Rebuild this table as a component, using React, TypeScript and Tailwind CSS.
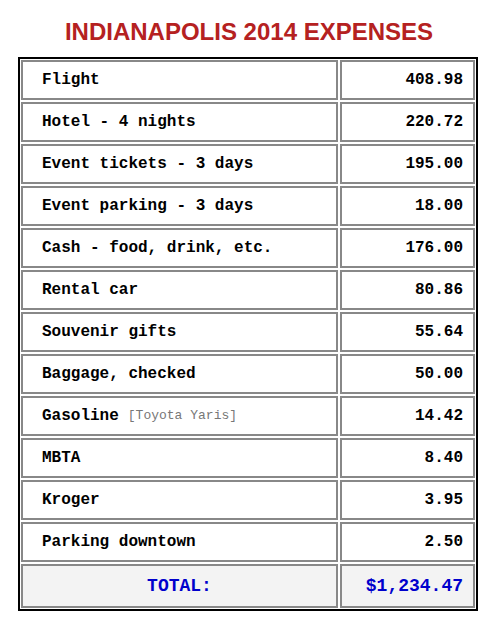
const rows: { label: string; note?: string; amount: string }[] = [
  { label: "Flight", amount: "408.98" },
  { label: "Hotel - 4 nights", amount: "220.72" },
  { label: "Event tickets - 3 days", amount: "195.00" },
  { label: "Event parking - 3 days", amount: "18.00" },
  { label: "Cash - food, drink, etc.", amount: "176.00" },
  { label: "Rental car", amount: "80.86" },
  { label: "Souvenir gifts", amount: "55.64" },
  { label: "Baggage, checked", amount: "50.00" },
  { label: "Gasoline", note: "[Toyota Yaris]", amount: "14.42" },
  { label: "MBTA", amount: "8.40" },
  { label: "Kroger", amount: "3.95" },
  { label: "Parking downtown", amount: "2.50" },
];

export default function App() {
  return (
    <div className="min-h-[639px] w-[498px] bg-white pt-[18px]">
      <h1 className="text-center font-['Liberation_Sans',Arial,sans-serif] text-[24px] font-bold leading-[28px] text-[#b52121]">
        INDIANAPOLIS 2014 EXPENSES
      </h1>
      <div className="mt-[11px] ml-[18px] w-[460px] border-2 border-black p-px font-['Liberation_Mono','Courier_New',monospace]">
        <div className="grid grid-cols-[317px_135px] gap-[2px]">
          {rows.map((r) => (
            <div key={r.label} className="contents">
              <div className="flex h-10 items-center border-2 border-[#888] pl-[19px] text-[16px] font-bold leading-[18px] text-black whitespace-pre">
                {r.label}
                {r.note && (
                  <span className="ml-[9px] text-[13px] font-normal text-[#777]">{r.note}</span>
                )}
              </div>
              <div className="flex h-10 items-center justify-end border-2 border-[#888] pr-[10px] text-[16px] font-bold leading-[18px] text-black">
                {r.amount}
              </div>
            </div>
          ))}
          <div className="flex h-11 items-center justify-center border-2 border-[#888] bg-[#f3f3f3] text-[18px] font-bold leading-[22px] text-[#0000cc]">
            TOTAL:
          </div>
          <div className="flex h-11 items-center justify-end border-2 border-[#888] bg-[#f3f3f3] pr-[10px] text-[18px] font-bold leading-[22px] text-[#0000cc]">
            $1,234.47
          </div>
        </div>
      </div>
    </div>
  );
}
